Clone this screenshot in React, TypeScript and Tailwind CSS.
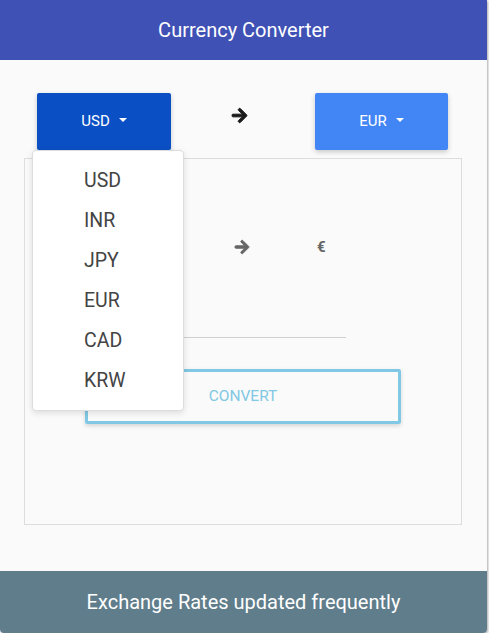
import React from "react";

function Arrow({ className }: { className?: string }) {
  return (
    <svg viewBox="0 0 448 512" className={className} fill="currentColor" stroke="currentColor" strokeWidth={30}>
      <path d="M190.5 66.9l22.2-22.2c9.4-9.4 24.6-9.4 33.9 0L441 239c9.4 9.4 9.4 24.6 0 33.9L246.6 467.3c-9.4 9.4-24.6 9.4-33.9 0l-22.2-22.2c-9.5-9.5-9.3-25 .4-34.3L311.4 296H24c-13.3 0-24-10.7-24-24v-32c0-13.3 10.7-24 24-24h287.4L190.9 101.2c-9.8-9.3-10-24.8-.4-34.3z" />
    </svg>
  );
}

function Caret() {
  return (
    <span className="inline-block ml-[9px] w-0 h-0 border-t-[4px] border-t-white border-x-[4px] border-x-transparent align-middle relative top-[-2px]" />
  );
}

export default function App() {
  const items = ["USD", "INR", "JPY", "EUR", "CAD", "KRW"];
  return (
    <div className="w-[489px] h-[633px] bg-white" style={{ fontFamily: "Roboto, 'Noto Sans', sans-serif" }}>
      <div className="relative w-[487px] h-[633px] flex flex-col bg-[#fafafa] rounded-b-[4px] shadow-[1px_1px_3px_rgba(0,0,0,0.35)] overflow-hidden">
        <div className="h-[60px] bg-[#3f51b5] text-white text-[20px] flex items-center justify-center">
          Currency Converter
        </div>
        <div className="flex-1 flex flex-col">
          <div className="flex items-start pt-[33px] pl-[37px]">
            <button className="w-[134px] h-[57px] bg-[#0b4fc4] text-white text-[15px] rounded-[2px] shadow-[0_2px_5px_rgba(0,0,0,0.2)] flex items-center justify-center">
              USD<Caret />
            </button>
            <div className="w-[144px] flex justify-center pt-[14px] pr-[8px]">
              <Arrow className="w-[17px] h-[17px] text-[#1a1a1a]" />
            </div>
            <button className="w-[133px] h-[57px] bg-[#4285f4] text-white text-[15px] rounded-[2px] shadow-[0_2px_5px_rgba(0,0,0,0.2)] flex items-center justify-center">
              EUR<Caret />
            </button>
          </div>
          <div className="mt-[8px] ml-[24px] w-[438px] h-[367px] border border-[#ddd] relative">
            <div className="absolute left-[209px] top-[80px]">
              <Arrow className="w-[16px] h-[16px] text-[#666]" />
            </div>
            <div className="absolute left-[292px] top-[77px] text-[15px] font-bold text-[#666]">€</div>
            <div className="absolute left-[80px] top-[178px] w-[241px] h-px bg-[#d0d0d0]" />
            <div className="absolute left-[60px] top-[210px] w-[316px] h-[55px] border-[3px] border-[#80c8e3] rounded-[2px] shadow-[0_2px_4px_rgba(0,0,0,0.15)] flex items-center justify-center text-[15.5px] text-[#80c8e3]">
              CONVERT
            </div>
          </div>
          <div className="flex-1" />
        </div>
        <div className="h-[62px] bg-[#607d8b] text-white text-[20px] flex items-center justify-center">
          Exchange Rates updated frequently
        </div>
        <div className="absolute left-[32px] top-[150px] w-[152px] h-[261px] bg-white border border-[#ddd] rounded-[4px] shadow-[0_2px_6px_rgba(0,0,0,0.12)] pt-[10px]">
          {items.map((it) => (
            <div key={it} className="h-[40px] flex items-center pl-[51px] text-[19.5px] text-[#444]">
              {it}
            </div>
          ))}
        </div>
      </div>
    </div>
  );
}
